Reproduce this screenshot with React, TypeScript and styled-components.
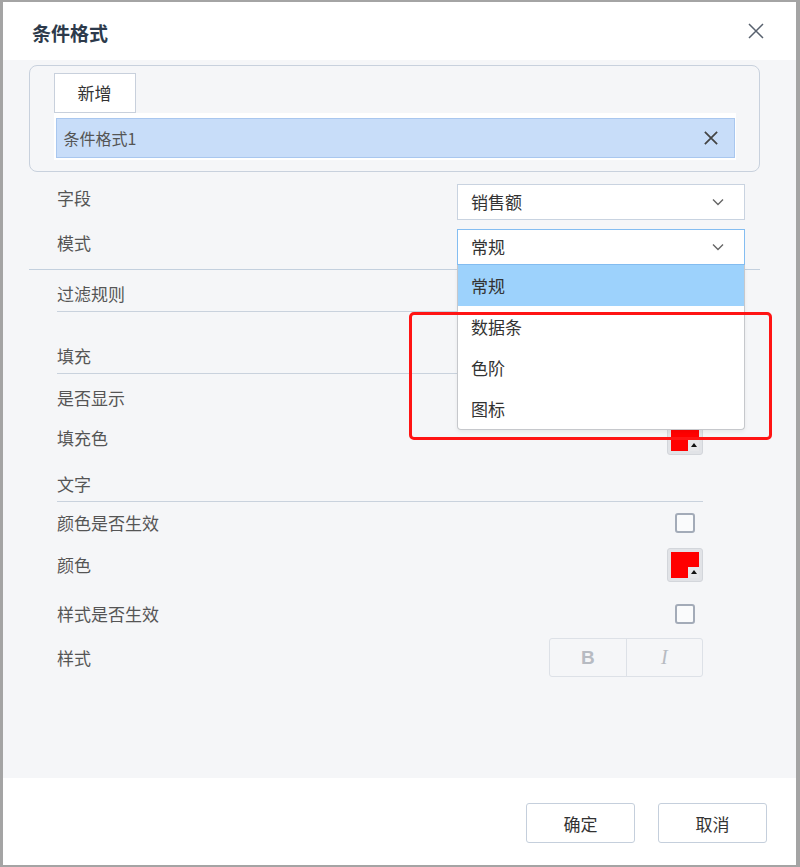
import React from "react";
import styled, { createGlobalStyle } from "styled-components";

const GlobalStyle = createGlobalStyle`
  html, body {
    margin: 0;
    padding: 0;
    background: #a4a4a4;
  }
  body {
    font-family: "Noto Sans CJK SC", "Noto Sans", sans-serif;
    color: #555;
  }
  #root {
    height: 867px;
    display: flex;
  }
`;

const Dialog = styled.div`
  flex: 1;
  margin: 2px 4px 2px 3px;
  display: flex;
  flex-direction: column;
  background: #fff;
`;

const Header = styled.div`
  height: 58px;
  flex-shrink: 0;
  display: flex;
  align-items: center;
  justify-content: space-between;
  padding: 2px 31px 0 29px;
  box-sizing: border-box;
`;

const Title = styled.div`
  font-size: 19px;
  font-weight: 700;
  color: #2d3a4b;
`;

const CloseButton = styled.div`
  width: 18px;
  height: 18px;
  display: flex;
  align-items: center;
  justify-content: center;
  margin-top: -2px;
`;

const Body = styled.div`
  flex: 1;
  background: #f5f6f8;
  padding: 5px 36px 0 26px;
`;

const RuleCard = styled.div`
  border: 1.5px solid #c8d1dd;
  border-radius: 8px;
  padding: 6.5px 23px 11px 23.5px;
`;

const AddButton = styled.div`
  width: 82px;
  height: 40px;
  box-sizing: border-box;
  display: flex;
  align-items: center;
  justify-content: center;
  background: #fff;
  border: 1px solid #c8d0dc;
  font-size: 17px;
  color: #333;
`;

const RuleList = styled.div`
  background: #fff;
  padding: 5px 1px 2px 2px;
`;

const RuleItem = styled.div`
  height: 40px;
  box-sizing: border-box;
  display: flex;
  align-items: center;
  justify-content: space-between;
  padding: 0 16px 0 7px;
  background: #c8ddf9;
  border: 1px solid #a9c7ef;
  font-size: 16px;
  color: #555;
`;

const Form = styled.div`
  padding-top: 12px;
`;

const FieldRow = styled.div<{ $gap?: number }>`
  display: flex;
  justify-content: space-between;
  align-items: flex-start;
  padding: 0 15px 0 28px;
  margin-top: ${(p) => p.$gap ?? 0}px;
`;

const Label = styled.div`
  font-size: 17px;
  line-height: 24px;
  color: #555;
`;

const FieldLabel = styled(Label)`
  padding-top: 2px;
`;

const Select = styled.div<{ $focused?: boolean }>`
  position: relative;
  width: 288px;
  height: 36px;
  box-sizing: border-box;
  display: flex;
  align-items: center;
  justify-content: space-between;
  padding: 0 20px 0 13px;
  background: #fff;
  border: 1px solid ${(p) => (p.$focused ? "#84bdf1" : "#c9d3e0")};
  font-size: 17px;
  color: #333;
`;

const Menu = styled.div`
  position: absolute;
  top: calc(100% + 1px);
  left: -1px;
  right: -1px;
  z-index: 10;
  background: #fff;
  border: 1px solid #c6c8cc;
  border-top: none;
  border-radius: 0 0 4px 4px;
  box-shadow: 0 2px 4px rgba(0, 0, 0, 0.06);
`;

const MenuItem = styled.div<{ $active?: boolean }>`
  height: 41px;
  display: flex;
  align-items: center;
  padding-left: 13px;
  font-size: 17px;
  color: #333;
  background: ${(p) => (p.$active ? "#9dd2fc" : "transparent")};
`;

const Highlight = styled.div`
  position: absolute;
  left: -49px;
  top: 82px;
  width: 363px;
  height: 128px;
  box-sizing: border-box;
  border: 3.5px solid #ff1414;
  border-radius: 5px;
  z-index: 11;
  pointer-events: none;
`;

const Divider = styled.div`
  margin-top: 4px;
  height: 1px;
  background: #c3d0de;
`;

const SectionTitle = styled(Label)<{ $gap: number }>`
  margin: ${(p) => p.$gap}px 57px 0 28px;
  padding-bottom: 5px;
  border-bottom: 1px solid #c9d2dd;
`;

const OptionRow = styled.div<{ $h: number; $gap?: number }>`
  height: ${(p) => p.$h}px;
  margin-top: ${(p) => p.$gap ?? 0}px;
  display: flex;
  align-items: center;
  justify-content: space-between;
  padding: 0 57px 0 28px;
`;

const Checkbox = styled.div`
  width: 20px;
  height: 20px;
  box-sizing: border-box;
  margin-right: 8px;
  border: 2px solid #a3abb8;
  border-radius: 3px;
  background: #fafbfc;
`;

const Swatch = styled.div`
  position: relative;
  width: 36px;
  height: 34px;
  box-sizing: border-box;
  padding: 3px;
  background: #e1e3e7;
  border: 1px solid #d3d6db;
  border-radius: 3px;
`;

const SwatchFill = styled.div<{ $color: string }>`
  width: 100%;
  height: 100%;
  background: ${(p) => p.$color};
`;

const SwatchArrow = styled.div`
  position: absolute;
  right: 3px;
  bottom: 3px;
  width: 11px;
  height: 11px;
  display: flex;
  align-items: center;
  justify-content: center;
  background: #e6e7ea;

  &::after {
    content: "";
    border-left: 3.5px solid transparent;
    border-right: 3.5px solid transparent;
    border-bottom: 4px solid #111;
  }
`;

const StyleGroup = styled.div`
  display: flex;
  width: 154px;
  height: 39px;
  box-sizing: border-box;
  border: 1px solid #dde1e7;
  border-radius: 3px;
`;

const StyleButton = styled.div<{ $italic?: boolean }>`
  flex: 1;
  display: flex;
  align-items: center;
  justify-content: center;
  color: #b7bbc2;
  font-size: ${(p) => (p.$italic ? 20 : 19)}px;
  font-family: ${(p) =>
    p.$italic ? '"Liberation Serif", serif' : '"Liberation Sans", sans-serif'};
  font-style: ${(p) => (p.$italic ? "italic" : "normal")};
  font-weight: ${(p) => (p.$italic ? 400 : 700)};

  & + & {
    border-left: 1px solid #dde1e7;
  }
`;

const Footer = styled.div`
  height: 87px;
  flex-shrink: 0;
  display: flex;
  justify-content: flex-end;
  align-items: flex-start;
  gap: 23px;
  padding: 25px 29px 0 0;
  box-sizing: border-box;
  background: #fff;
`;

const FooterButton = styled.div`
  width: 109px;
  height: 40px;
  box-sizing: border-box;
  display: flex;
  align-items: center;
  justify-content: center;
  border: 1px solid #c5cfdc;
  border-radius: 3px;
  background: #fff;
  font-size: 17px;
  color: #333;
`;

function CrossIcon({ size, stroke, width }: { size: number; stroke: string; width: number }) {
  return (
    <svg width={size} height={size} viewBox="0 0 16 16">
      <path d="M1 1 L15 15 M15 1 L1 15" stroke={stroke} strokeWidth={width} fill="none" />
    </svg>
  );
}

function Chevron() {
  return (
    <svg width="12" height="8" viewBox="0 0 12 8">
      <polyline points="1,1.5 6,6.5 11,1.5" fill="none" stroke="#666" strokeWidth="1.4" />
    </svg>
  );
}

function ColorSwatch({ color }: { color: string }) {
  return (
    <Swatch>
      <SwatchFill $color={color} />
      <SwatchArrow />
    </Swatch>
  );
}

const modeOptions = ["常规", "数据条", "色阶", "图标"];

export default function App() {
  return (
    <>
      <GlobalStyle />
      <Dialog>
        <Header>
          <Title>条件格式</Title>
          <CloseButton>
            <CrossIcon size={16} stroke="#58616e" width={1.5} />
          </CloseButton>
        </Header>
        <Body>
          <RuleCard>
            <AddButton>新增</AddButton>
            <RuleList>
              <RuleItem>
                <span>条件格式1</span>
                <CrossIcon size={14} stroke="#444" width={2} />
              </RuleItem>
            </RuleList>
          </RuleCard>

          <Form>
            <FieldRow>
              <FieldLabel>字段</FieldLabel>
              <Select>
                <span>销售额</span>
                <Chevron />
              </Select>
            </FieldRow>
            <FieldRow $gap={9}>
              <FieldLabel>模式</FieldLabel>
              <Select $focused>
                <span>常规</span>
                <Chevron />
                <Menu>
                  {modeOptions.map((o, i) => (
                    <MenuItem key={o} $active={i === 0}>
                      {o}
                    </MenuItem>
                  ))}
                </Menu>
                <Highlight />
              </Select>
            </FieldRow>
            <Divider />

            <SectionTitle $gap={12}>过滤规则</SectionTitle>

            <SectionTitle $gap={32}>填充</SectionTitle>
            <OptionRow $h={40} $gap={4}>
              <Label>是否显示</Label>
              <Checkbox />
            </OptionRow>
            <OptionRow $h={40}>
              <Label>填充色</Label>
              <ColorSwatch color="#ff0000" />
            </OptionRow>

            <SectionTitle $gap={14}>文字</SectionTitle>
            <OptionRow $h={42}>
              <Label>颜色是否生效</Label>
              <Checkbox />
            </OptionRow>
            <OptionRow $h={42}>
              <Label>颜色</Label>
              <ColorSwatch color="#ff0000" />
            </OptionRow>
            <OptionRow $h={42} $gap={7}>
              <Label>样式是否生效</Label>
              <Checkbox />
            </OptionRow>
            <OptionRow $h={46}>
              <Label>样式</Label>
              <StyleGroup>
                <StyleButton>B</StyleButton>
                <StyleButton $italic>I</StyleButton>
              </StyleGroup>
            </OptionRow>
          </Form>
        </Body>
        <Footer>
          <FooterButton>确定</FooterButton>
          <FooterButton>取消</FooterButton>
        </Footer>
      </Dialog>
    </>
  );
}
